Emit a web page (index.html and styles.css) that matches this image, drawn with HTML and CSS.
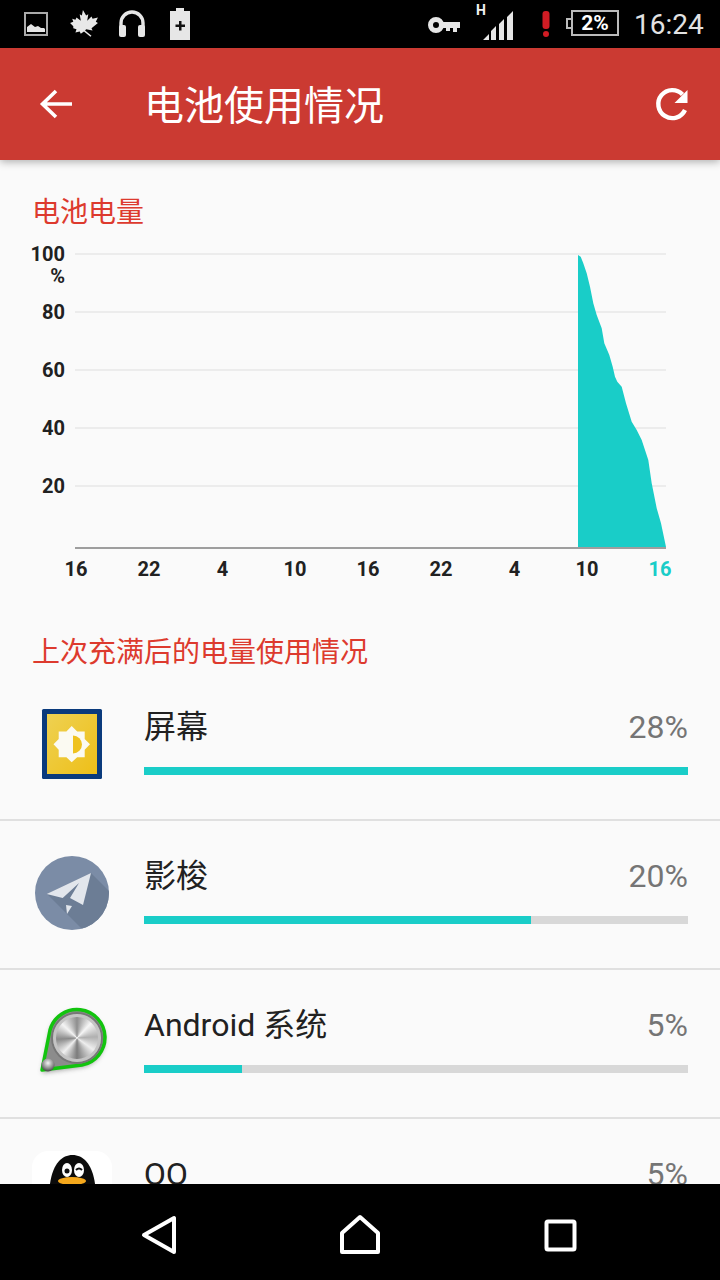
FILE: index.html
```html
<!DOCTYPE html>
<html lang="zh">
<head>
<meta charset="utf-8">
<title>电池使用情况</title>
<link rel="stylesheet" href="styles.css">
</head>
<body>
<div class="screen">
  <header class="status">
    <svg class="si si-image" width="24" height="24" viewBox="0 0 24 24"><rect x="1" y="1" width="22" height="22" fill="none" stroke="#aaa" stroke-width="2"/><path d="M3 20v-5l4-3 4 3 3-1 3 2 3 0 1 1v3z" fill="#e6e6e6"/></svg>
    <svg class="si si-leaf" width="30" height="30" viewBox="1 0 28 28"><path d="M14 1l3 5 2-1-1 6 4-4 1 2 5-1-2 4 2 1-6 5 1 2-6-1-1 1 6 5-1 1-6-5-3 2-1-2-4 1 1-3-3-1 0-2-3-3 3-1-1-3 3 1 1-2 4 3-1-6 2 1z" fill="#e8e8e8"/></svg>
    <svg class="si si-head" width="28" height="28" viewBox="0 0 28 28"><path d="M3 18v-5a11 11 0 0 1 22 0v5" fill="none" stroke="#e6e6e6" stroke-width="3.4"/><rect x="1" y="15" width="7" height="12" rx="2" fill="#e6e6e6"/><rect x="20" y="15" width="7" height="12" rx="2" fill="#e6e6e6"/></svg>
    <svg class="si si-batt" width="20" height="32" viewBox="0 0 20 32"><path d="M6 0h8v3h6v29H0V3h6z" fill="#e6e6e6"/><path d="M9 13h2.500v3.500H15V19h-3.500v3.500H9V19H5.500v-2.500H9z" fill="#111"/></svg>
    <svg class="si si-key" width="32" height="18" viewBox="0 0 32 18"><circle cx="8" cy="9" r="5.500" fill="none" stroke="#e6e6e6" stroke-width="5"/><path d="M14 6h18v6h-3v4h-4v-4h-3v3h-4v-3h-4z" fill="#e6e6e6"/></svg>
    <span class="si-h">H</span>
    <svg class="si si-signal" width="30" height="30" viewBox="0 0 30 30"><path d="M0 30l6-6v6zM8 30V21l5-5v14zM16 30V14l5-5v21zM24 30V7l6-6v29z" fill="#e6e6e6"/></svg>
    <svg class="si si-alert" width="8" height="26" viewBox="0 0 8 26"><rect x="0.500" y="0" width="7" height="18" rx="3" fill="#d01c24"/><circle cx="4" cy="23" r="3" fill="#d01c24"/></svg>
    <div class="si-battery"><span class="batt-cap"></span><span class="batt-body">2%</span></div>
    <span class="clock">16:24</span>
  </header>

  <div class="appbar">
    <svg class="back" width="36" height="36" viewBox="0 0 36 36"><path d="M34 18H5M18 5L4.500 18 18 31" fill="none" stroke="#fff" stroke-width="3.600"/></svg>
    <h1 class="title">电池使用情况</h1>
    <svg class="refresh" width="36" height="36" viewBox="0 0 36 36"><path d="M27.500 8.500A14 14 0 1 0 30 24" fill="none" stroke="#fff" stroke-width="4.400"/><path d="M32.500 4v13h-13z" fill="#fff"/></svg>
  </div>

  <main class="content">
    <h2 class="heading heading-chart">电池电量</h2>
    <svg class="chart" width="720" height="356" viewBox="0 240 720 356">
      <g class="grid">
        <rect x="75" y="253" width="591" height="2"/>
        <rect x="75" y="311" width="591" height="2"/>
        <rect x="75" y="369" width="591" height="2"/>
        <rect x="75" y="427" width="591" height="2"/>
        <rect x="75" y="485" width="591" height="2"/>
      </g>
      <path class="area" d="M578 255L580.700 256.700 583.300 263.300 586.700 273.300 590 286.700 593.300 303.300 596.700 315 601.700 328.300 604.300 343.300 609.300 355 612.700 366.700 615 376.700 617.300 381.700 621.700 386.700 626 403.300 631.700 421.700 636.700 430 641.700 440 648.300 460 651.700 483.300 656.700 508.300 661 523.300 666 547V548H578Z"/>
      <rect class="axis" x="75" y="547" width="591" height="2"/>
      <g class="ylabels">
        <text x="65" y="261">100</text>
        <text class="pct-sign" x="65" y="283">%</text>
        <text x="65" y="319">80</text>
        <text x="65" y="377">60</text>
        <text x="65" y="435">40</text>
        <text x="65" y="493">20</text>
      </g>
      <g class="xlabels">
        <text x="76" y="576">16</text>
        <text x="149" y="576">22</text>
        <text x="222.500" y="576">4</text>
        <text x="295" y="576">10</text>
        <text x="368" y="576">16</text>
        <text x="441" y="576">22</text>
        <text x="514.500" y="576">4</text>
        <text x="587" y="576">10</text>
        <text class="now" x="660" y="576">16</text>
      </g>
    </svg>

    <h2 class="heading heading-list">上次充满后的电量使用情况</h2>

    <ul class="rows">
      <li class="row">
        <svg class="app-icon" width="80" height="80" viewBox="0 0 80 80">
          <defs><linearGradient id="yel" x1="0" y1="0" x2="1" y2="1"><stop offset="0" stop-color="#eed152"/><stop offset="1" stop-color="#eebf18"/></linearGradient></defs>
          <rect x="10" y="5" width="60" height="70" rx="1.500" fill="#0a3a7c"/>
          <rect x="15" y="10" width="50" height="60" fill="url(#yel)"/>
          <path d="M39.700 22l5.500 5.500h7.500V35l5.300 5.300-5.300 5.500v7.500h-7.500l-5.500 5-5.300-5h-7.700v-7.500l-5.200-5.500 5.200-5.300v-7.500h7.700z" fill="#fbfaf2"/>
          <path d="M41 31.500a9 9 0 0 1 0 18z" fill="#efc21f"/>
        </svg>
        <div class="info">
          <div class="line"><span class="name">屏幕</span><span class="pct">28%</span></div>
          <div class="bar"><div class="fill" style="width:100%"></div></div>
        </div>
      </li>
      <li class="row">
        <svg class="app-icon" width="80" height="80" viewBox="0 0 80 80">
          <defs><clipPath id="disc"><circle cx="40" cy="40" r="37"/></clipPath></defs>
          <circle cx="40" cy="40" r="37" fill="#7b8ca6"/>
          <path d="M59 20L85 46V90H64L15 41z" fill="#6c7d95" clip-path="url(#disc)"/>
          <path d="M59 20L14.700 41l16 4L47 30 38 45l13 7z" fill="#e2e6ec"/>
          <path d="M34 52l6 1-5 8z" fill="#e2e6ec"/>
        </svg>
        <div class="info">
          <div class="line"><span class="name">影梭</span><span class="pct">20%</span></div>
          <div class="bar"><div class="fill" style="width:71.100%"></div></div>
        </div>
      </li>
      <li class="row">
        <div class="metal-icon">
          <svg class="drop" width="80" height="80" viewBox="0 0 80 80">
            <defs>
              <filter id="soft" x="-20%" y="-20%" width="140%" height="140%"><feGaussianBlur stdDeviation="2.500"/></filter>
              <radialGradient id="ball" cx="0.500" cy="0.350" r="0.700"><stop offset="0" stop-color="#f4f4f4"/><stop offset="0.600" stop-color="#8a8a8a"/><stop offset="1" stop-color="#333"/></radialGradient>
            </defs>
            <path d="M10 71L18 29A28 28 0 1 1 51 65z" fill="#555" opacity="0.550" filter="url(#soft)"/>
            <path d="M10 68L18 28A28 28 0 1 1 50 63z" fill="#8c8c8c" stroke="#12c40e" stroke-width="3.500" stroke-linejoin="round"/>
            <circle cx="16" cy="63" r="6.500" fill="url(#ball)"/>
          </svg>
          <span class="disc"></span>
        </div>
        <div class="info">
          <div class="line"><span class="name">Android 系统</span><span class="pct">5%</span></div>
          <div class="bar"><div class="fill" style="width:18%"></div></div>
        </div>
      </li>
      <li class="row">
        <svg class="app-icon" width="80" height="80" viewBox="0 0 80 80">
          <rect width="80" height="80" rx="16" fill="#fff"/>
          <path d="M17 48C17 16 28 4 40.500 4S64 16 64 48v20H17z" fill="#0b0b0b"/>
          <ellipse cx="35" cy="19" rx="5" ry="7" fill="#fff"/><ellipse cx="47" cy="19" rx="5" ry="7" fill="#fff"/>
          <circle cx="35" cy="20" r="2.500" fill="#111"/><path d="M44 19q3-3 6 0" fill="none" stroke="#111" stroke-width="2"/>
          <ellipse cx="40" cy="30" rx="14" ry="4" fill="#f5a81c"/>
        </svg>
        <div class="info">
          <div class="line"><span class="name">QQ</span><span class="pct">5%</span></div>
          <div class="bar"><div class="fill" style="width:18%"></div></div>
        </div>
      </li>
    </ul>
  </main>

  <nav class="nav">
    <svg width="40" height="48" viewBox="0 0 40 48"><path d="M4 27L34 10V44z" fill="none" stroke="#fff" stroke-width="4" stroke-linejoin="round"/></svg>
    <svg width="40" height="48" viewBox="0 0 40 48"><path d="M20 9L38 25V44H2V25z" fill="none" stroke="#fff" stroke-width="4" stroke-linejoin="round"/></svg>
    <svg width="40" height="48" viewBox="0 0 40 48"><rect x="6.500" y="13.500" width="28" height="28" rx="1.500" fill="none" stroke="#fff" stroke-width="4"/></svg>
  </nav>
</div>
</body>
</html>
```
FILE: styles.css
```css
* { box-sizing: border-box; }
html, body { margin: 0; padding: 0; background: #000; }
body { font-family: Roboto, "Noto Sans CJK SC", sans-serif; }
.screen { width: 720px; height: 1280px; display: flex; flex-direction: column; overflow: hidden; background: #fafafa; }

.status { height: 48px; flex: none; background: #000; display: flex; align-items: flex-start; color: #e6e6e6; }
.si { flex: none; display: block; }
.si-image { margin: 12px 0 0 24px; }
.si-leaf { margin: 9px 0 0 21px; }
.si-head { margin: 10px 0 0 19px; }
.si-batt { margin: 8px 0 0 24px; }
.si-key { margin: 16px 0 0 238px; }
.si-h { margin: 2px 0 0 16px; width: 9px; font-size: 14px; line-height: 16px; font-weight: 700; color: #f0f0f0; }
.si-signal { margin: 10px 0 0 -2px; }
.si-alert { margin: 11px 0 0 29px; }
.si-battery { margin: 10px 0 0 16px; width: 53px; height: 26px; display: flex; align-items: center; }
.batt-cap { width: 6px; height: 11px; margin-right: -1px; border: 2px solid #bbb; border-right: 0; flex: none; }
.batt-body { flex: 1; height: 26px; border: 2px solid #bbb; color: #fff; font-size: 21px; font-weight: 700; line-height: 22px; text-align: center; }
.clock { margin: 7px 0 0 15px; font-size: 28px; line-height: 36px; color: #e2e2e2; }

.appbar { position: relative; z-index: 1; height: 112px; flex: none; background: #cb3a32; display: flex; align-items: center; padding: 0 29px 0 38px; box-shadow: 0 2px 8px rgba(0,0,0,.3); }
.back { flex: none; margin-right: 70px; }
.title { flex: 1; margin: 0 0 2px; font-size: 40px; font-weight: 400; line-height: 56px; color: #fff; font-family: "Noto Sans CJK SC", sans-serif; }
.refresh { flex: none; }

.content { flex: 1; min-height: 0; overflow: hidden; }
.heading { margin: 0; padding-left: 32px; font-size: 28px; font-weight: 400; line-height: 40px; color: #dd3a2e; font-family: "Noto Sans CJK SC", sans-serif; }
.heading-chart { padding-top: 30px; height: 80px; }
.heading-list { margin-top: 34px; height: 42px; }
.chart { display: block; }
.grid rect { fill: #ececec; }
.axis { fill: #9e9e9e; }
.area { fill: #19cdc8; }
.ylabels text, .xlabels text { font-family: Roboto, sans-serif; font-size: 20px; font-weight: 700; fill: #212121; }
.ylabels text { text-anchor: end; }
.ylabels .pct-sign { font-size: 20px; }
.xlabels text { text-anchor: middle; }
.xlabels .now { fill: #19cdc8; }

.rows { list-style: none; margin: 0; padding: 0; }
.row { height: 149px; padding: 32px 32px 0 32px; border-bottom: 2px solid #e0e0e0; display: flex; align-items: flex-start; }
.app-icon { flex: none; display: block; }
.metal-icon { position: relative; flex: none; width: 80px; height: 80px; }
.drop { display: block; }
.disc { position: absolute; left: 21px; top: 12px; width: 48px; height: 48px; border-radius: 50%; border: 3px solid #c4c4c4; box-shadow: 0 0 0 2px #777; background: conic-gradient(#8e8e8e, #f6f6f6 12%, #b0b0b0 24%, #eeeeee 35%, #7c7c7c 50%, #f0f0f0 62%, #8a8a8a 74%, #f4f4f4 87%, #8e8e8e); }
.info { flex: 1; margin-left: 32px; min-width: 0; }
.line { height: 63px; display: flex; justify-content: space-between; align-items: center; padding-bottom: 17px; }
.name { font-size: 32px; line-height: 46px; color: #212121; font-family: Roboto, "Noto Sans CJK SC", sans-serif; }
.pct { font-size: 32px; line-height: 46px; color: #757575; }
.bar { height: 8px; background: #d8d8d8; }
.fill { height: 100%; background: #19cdc8; }

.nav { height: 96px; flex: none; background: #000; display: flex; justify-content: center; align-items: center; gap: 160px; }
.nav svg { display: block; }
```
